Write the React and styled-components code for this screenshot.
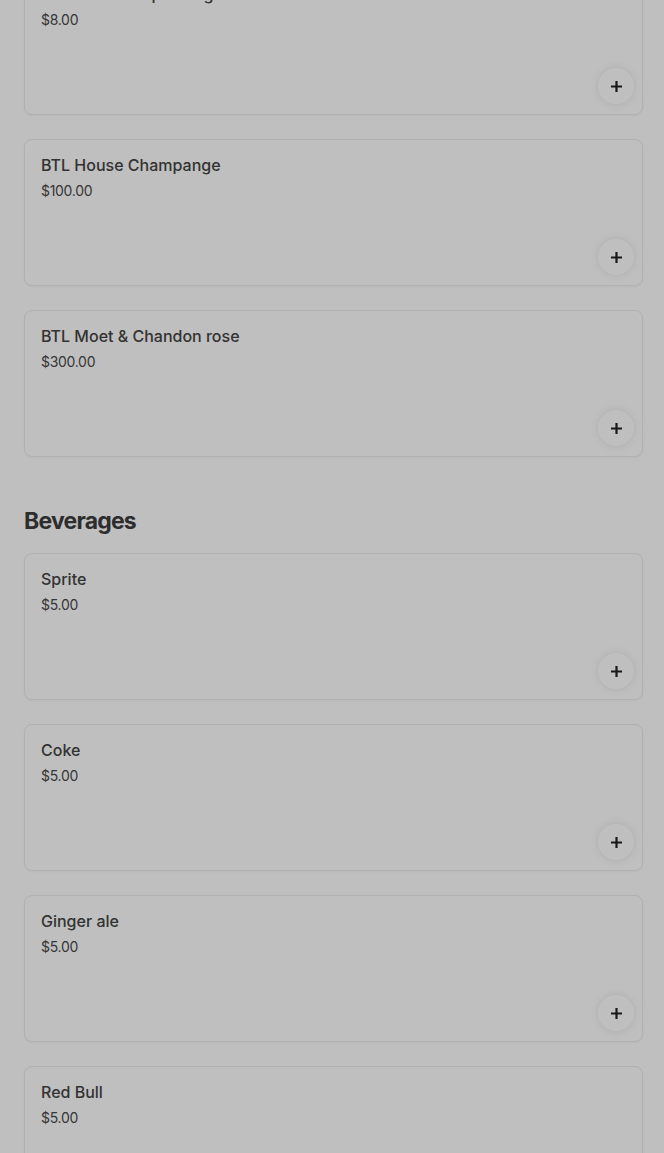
import React from 'react'
import styled, { createGlobalStyle } from 'styled-components'

const GlobalStyle = createGlobalStyle`
  html, body {
    margin: 0;
    padding: 0;
    background: #fff;
    font-family: 'Inter', 'Roboto', sans-serif;
    color: #444;
    overflow: hidden;
  }
`

const Page = styled.main`
  padding: 0 21px 0 24px;
  margin-top: -32px;
`

const Section = styled.section`
  display: flex;
  flex-direction: column;
  gap: 24px;
`

const SectionTitle = styled.h2`
  margin: 24px 0 -8px;
  font-size: 23px;
  line-height: 32px;
  font-weight: 700;
  letter-spacing: -0.8px;
  color: #3d3d3d;
`

const Card = styled.article`
  box-sizing: border-box;
  min-height: 147px;
  display: flex;
  flex-direction: column;
  padding: 15px 8px 10px 16px;
  border: 1px solid #ececec;
  border-radius: 8px;
  background: #fff;
  box-shadow: 0 1px 2px rgba(0, 0, 0, 0.04);
`

const Name = styled.div`
  font-size: 16px;
  line-height: 20px;
  font-weight: 500;
  color: #444;
`

const Price = styled.div`
  margin-top: 6px;
  font-size: 14px;
  line-height: 20px;
  color: #4a4a4a;
  letter-spacing: -0.3px;
`

const AddButton = styled.button`
  margin-top: auto;
  align-self: flex-end;
  width: 36px;
  height: 36px;
  border-radius: 50%;
  border: none;
  background: #fff;
  box-shadow: 0 0 8px rgba(0, 0, 0, 0.1);
  display: flex;
  align-items: center;
  justify-content: center;
  padding: 0;
  color: #222;
`

const Overlay = styled.div`
  position: fixed;
  inset: 0;
  background: rgba(0, 0, 0, 0.25);
`

const Plus = () => (
  <svg width='13' height='13' viewBox='0 0 13 13'>
    <path d='M6.5 1v11M1 6.5h11' stroke='currentColor' strokeWidth='2.2' />
  </svg>
)

const MenuItem = ({ name, price }) => (
  <Card>
    <Name>{name}</Name>
    <Price>{price}</Price>
    <AddButton aria-label={`Add ${name}`}><Plus /></AddButton>
  </Card>
)

const champagne = [
  { name: 'Glass House Sparkling', price: '$8.00' },
  { name: 'BTL House Champange', price: '$100.00' },
  { name: 'BTL Moet & Chandon rose', price: '$300.00' }
]

const beverages = [
  { name: 'Sprite', price: '$5.00' },
  { name: 'Coke', price: '$5.00' },
  { name: 'Ginger ale', price: '$5.00' },
  { name: 'Red Bull', price: '$5.00' }
]

export default function App () {
  return (
    <>
      <GlobalStyle />
      <Page>
        <Section>
          {champagne.map(item => <MenuItem key={item.name} {...item} />)}
          <SectionTitle>Beverages</SectionTitle>
          {beverages.map(item => <MenuItem key={item.name} {...item} />)}
        </Section>
      </Page>
      <Overlay />
    </>
  )
}
